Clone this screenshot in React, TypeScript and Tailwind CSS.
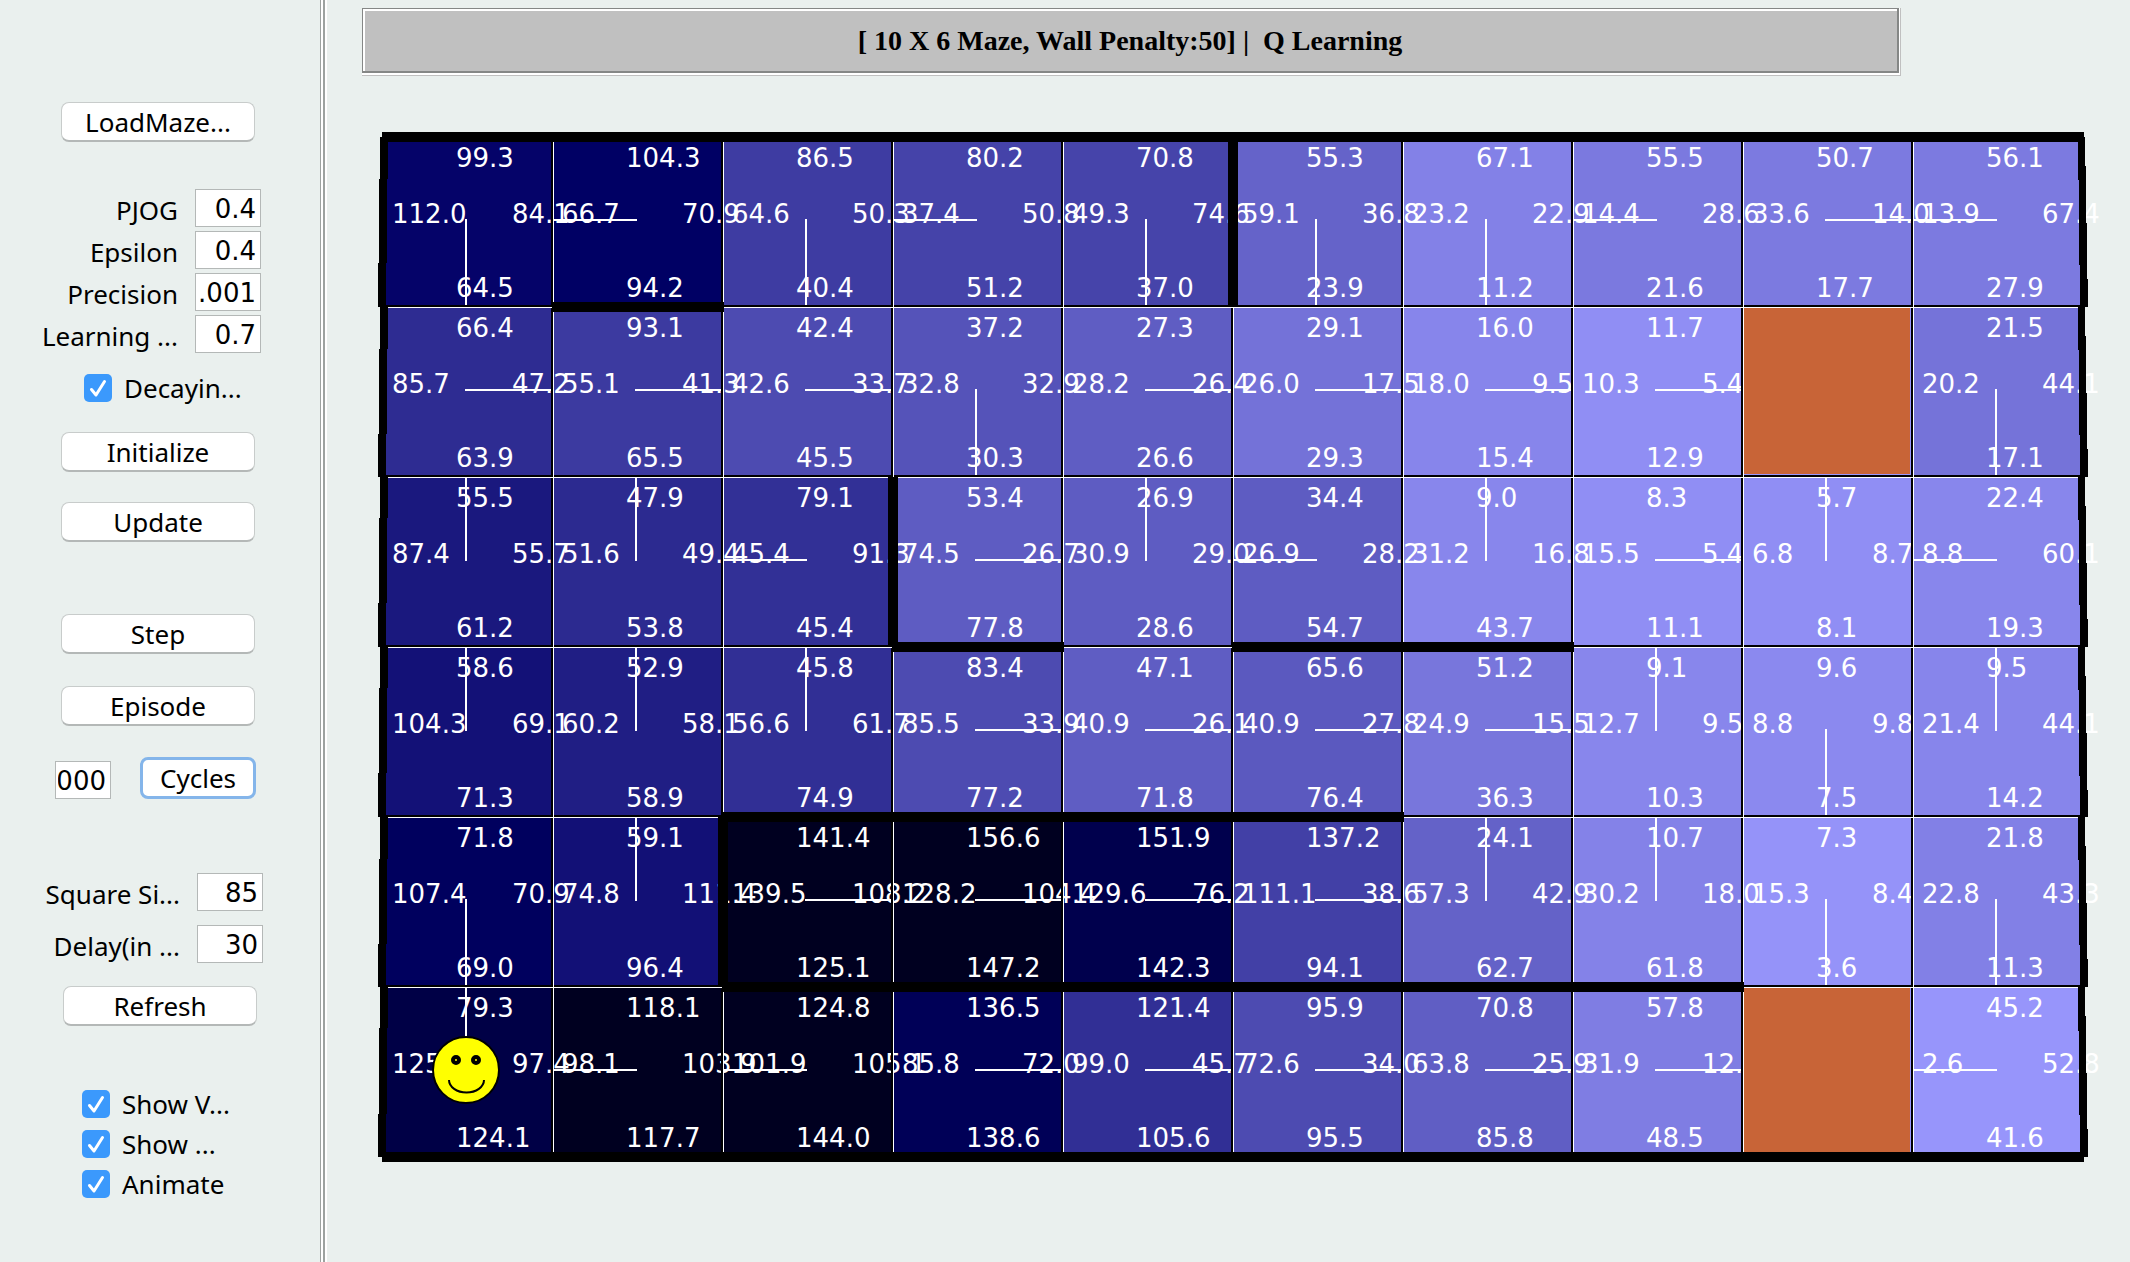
import React from "react";

type Cell = { up: string; left: string; right: string; down: string } | null;
type Direction = "up" | "left" | "right" | "down";

// Each entry lists the Q values as "up left right down"; "goal" marks a goal square.
const ROWS: string[][] = [
  ["99.3 112.0 84.1 64.5", "104.3 66.7 70.9 94.2", "86.5 64.6 50.3 40.4", "80.2 37.4 50.8 51.2", "70.8 49.3 74.6 37.0", "55.3 59.1 36.8 23.9", "67.1 23.2 22.9 11.2", "55.5 14.4 28.6 21.6", "50.7 33.6 14.0 17.7", "56.1 13.9 67.4 27.9"],
  ["66.4 85.7 47.2 63.9", "93.1 55.1 41.3 65.5", "42.4 42.6 33.7 45.5", "37.2 32.8 32.9 30.3", "27.3 28.2 26.4 26.6", "29.1 26.0 17.5 29.3", "16.0 18.0 9.5 15.4", "11.7 10.3 5.4 12.9", "goal", "21.5 20.2 44.1 17.1"],
  ["55.5 87.4 55.7 61.2", "47.9 51.6 49.4 53.8", "79.1 45.4 91.3 45.4", "53.4 74.5 26.7 77.8", "26.9 30.9 29.0 28.6", "34.4 26.9 28.2 54.7", "9.0 31.2 16.8 43.7", "8.3 15.5 5.4 11.1", "5.7 6.8 8.7 8.1", "22.4 8.8 60.1 19.3"],
  ["58.6 104.3 69.1 71.3", "52.9 60.2 58.1 58.9", "45.8 56.6 61.7 74.9", "83.4 85.5 33.9 77.2", "47.1 40.9 26.1 71.8", "65.6 40.9 27.8 76.4", "51.2 24.9 15.5 36.3", "9.1 12.7 9.5 10.3", "9.6 8.8 9.8 7.5", "9.5 21.4 44.1 14.2"],
  ["71.8 107.4 70.9 69.0", "59.1 74.8 111.4 96.4", "141.4 139.5 108.2 125.1", "156.6 128.2 104.4 147.2", "151.9 129.6 76.2 142.3", "137.2 111.1 38.6 94.1", "24.1 57.3 42.9 62.7", "10.7 30.2 18.0 61.8", "7.3 15.3 8.4 3.6", "21.8 22.8 43.3 11.3"],
  ["79.3 125.8 97.4 124.1", "118.1 98.1 103.9 117.7", "124.8 101.9 105.1 144.0", "136.5 85.8 72.0 138.6", "121.4 99.0 45.7 105.6", "95.9 72.6 34.0 95.5", "70.8 63.8 25.9 85.8", "57.8 31.9 12.7 48.5", "goal", "45.2 2.6 52.8 41.6"],
];

const CELLS: Cell[] = ROWS.flat().map((entry) => {
  if (entry === "goal") return null;
  const [up, left, right, down] = entry.split(" ");
  return { up, left, right, down };
});

const SIZE = 170;

// Column, row and length (in squares) of each horizontal wall.
const H_WALLS: [number, number, number][] = [
  [0, 0, 10],
  [1, 1, 1],
  [3, 3, 1],
  [5, 3, 2],
  [2, 4, 4],
  [2, 5, 6],
  [0, 6, 10],
];

// Column and row of each inner vertical wall.
const V_WALLS: [number, number][] = [
  [5, 0],
  [3, 2],
  [2, 4],
];

const LINES: Record<Direction, string> = {
  up: "left-[81px] top-0 h-[83px] w-[2px]",
  down: "left-[81px] top-[81px] h-[86px] w-[2px]",
  left: "left-0 top-[81px] h-[2px] w-[83px]",
  right: "left-[81px] top-[81px] h-[2px] w-[86px]",
};

function best(cell: NonNullable<Cell>): Direction {
  const order: Direction[] = ["left", "right", "up", "down"];
  return order.reduce((a, b) => (Number(cell[b]) < Number(cell[a]) ? b : a));
}

function shade(value: number) {
  const base = Math.round(157 - 2.36 * value);
  const rg = Math.max(0, base);
  return `rgb(${rg}, ${Math.max(0, rg - 2)}, ${Math.max(32, base + 100)})`;
}

function Face() {
  return (
    <svg viewBox="0 0 68 68" className="absolute left-12 top-12 z-40 size-[68px]" aria-label="Agent">
      <circle cx="34" cy="34" r="33" fill="#ffff00" stroke="#000" strokeWidth="2" />
      <circle cx="24" cy="24" r="3" fill="#ffff00" stroke="#000" strokeWidth="4" />
      <circle cx="44" cy="24" r="3" fill="#ffff00" stroke="#000" strokeWidth="4" />
      <path d="M17 44 A17.500 12.500 0 0 0 52 44" fill="none" stroke="#000" strokeWidth="2" />
    </svg>
  );
}

function Square({ cell, agent }: { cell: Cell; agent: boolean }) {
  const color = cell ? shade(Number(cell[best(cell)])) : "#9996ff";
  return (
    <div className="relative h-[170px] border-l border-t border-white" style={{ backgroundColor: color }}>
      {cell ? (
        <>
          <div className={`absolute bg-white ${LINES[best(cell)]}`} />
          <div className="relative z-10 flex flex-col pt-[5px]">
            <span className="pl-[72px]">{cell.up}</span>
            <span className="mt-[26px] flex pl-2">
              <span className="w-[120px] shrink-0">{cell.left}</span>
              <span>{cell.right}</span>
            </span>
            <span className="mt-11 pl-[72px]">{cell.down}</span>
          </div>
        </>
      ) : (
        <div className="absolute inset-0 bottom-[3px] right-[3px] z-20 bg-[#c86437]" />
      )}
      <div className="absolute inset-y-0 right-0 z-20 w-[2px] bg-black" />
      <div className="absolute inset-x-0 bottom-0 z-20 h-[2px] bg-black" />
      {agent && <Face />}
    </div>
  );
}

function Walls() {
  return (
    <svg viewBox="0 0 1700 1020" className="absolute left-0 top-0 z-30 h-[1020px] w-[1700px] overflow-visible" shapeRendering="crispEdges" aria-hidden="true">
      {H_WALLS.map(([c, r, n]) => (
        <rect key={`h${c}-${r}`} x={c * SIZE - 1} y={r * SIZE - 5} width={n * SIZE + 2} height="10" />
      ))}
      {V_WALLS.map(([c, r]) => (
        <rect key={`v${c}-${r}`} x={c * SIZE - 5} y={r * SIZE} width="10" height={SIZE} />
      ))}
      {[0, 1, 2, 3, 4, 5].map((r) => {
        const y = r * SIZE;
        const b = y + SIZE;
        return (
          <g key={r}>
            <polygon points={`-3,${y} 5,${y} 3,${b} -5,${b}`} />
            <polygon points={`1695,${y} 1702,${y} 1705,${b} 1697,${b}`} />
          </g>
        );
      })}
    </svg>
  );
}

function Button({ children, focused = false }: { children: string; focused?: boolean }) {
  return (
    <button
      type="button"
      className={
        focused
          ? "h-[42px] w-[116px] rounded-lg border-[3px] border-[#84b5ea] bg-white leading-8"
          : "h-10 w-[194px] rounded-lg border border-b-2 border-[#c8cccb] border-b-[#b4b8b7] bg-white leading-8"
      }
    >
      {children}
    </button>
  );
}

function Field({ id, value, label, narrow = false }: { id: string; value: string; label?: string; narrow?: boolean }) {
  return (
    <input
      id={id}
      aria-label={label}
      dir="rtl"
      type="text"
      defaultValue={value}
      className={`h-[38px] shrink-0 border border-[#b4b8b7] bg-white pl-[2px] pr-1 pt-[2px] font-['DejaVu_Sans',sans-serif] text-[26px] ${narrow ? "w-14" : "w-[66px]"}`}
    />
  );
}

function LabeledField({ id, value, children }: { id: string; value: string; children: string }) {
  return (
    <div className="flex h-[38px] items-center">
      <label htmlFor={id} className="w-[178px] whitespace-nowrap pt-[3px] text-right">
        {children}
      </label>
      <div className="ml-[17px] flex">
        <Field id={id} value={value} />
      </div>
    </div>
  );
}

function Check({ children }: { children: string }) {
  return (
    <label className="flex h-7 items-center gap-3 whitespace-nowrap">
      <span className="relative size-7">
        <input type="checkbox" defaultChecked className="block size-7 appearance-none rounded-[5px] bg-[#3b99fc]" />
        <svg viewBox="0 0 28 28" className="pointer-events-none absolute inset-0 size-7" aria-hidden="true">
          <path d="M7.500 15.500 L12 21 L20.500 7.500" fill="none" stroke="#fff" strokeWidth="3" strokeLinecap="round" strokeLinejoin="round" />
        </svg>
      </span>
      {children}
    </label>
  );
}

function Sidebar() {
  return (
    <aside className="flex w-80 shrink-0 flex-col pt-[102px] text-[26px] leading-9">
      <div className="pl-[61px]">
        <Button>LoadMaze...</Button>
      </div>
      <div className="mt-[47px] flex flex-col gap-1">
        <LabeledField id="pjog" value="0.4">PJOG</LabeledField>
        <LabeledField id="epsilon" value="0.4">Epsilon</LabeledField>
        <LabeledField id="precision" value="0.001">Precision</LabeledField>
        <LabeledField id="learning" value="0.7">Learning ...</LabeledField>
      </div>
      <div className="mt-[21px] pl-[84px]">
        <Check>Decayin...</Check>
      </div>
      <div className="mt-[30px] flex flex-col items-start gap-[30px] pl-[61px]">
        <Button>Initialize</Button>
        <Button>Update</Button>
      </div>
      <div className="mt-[72px] flex flex-col items-start gap-8 pl-[61px]">
        <Button>Step</Button>
        <Button>Episode</Button>
      </div>
      <div className="mt-[31px] flex items-end gap-[29px] pl-[55px]">
        <Field id="cycles" label="Number of cycles" value="1000" narrow />
        <Button focused>Cycles</Button>
      </div>
      <div className="mt-[74px] flex flex-col gap-[14px] pl-[2px]">
        <LabeledField id="square" value="85">Square Si...</LabeledField>
        <LabeledField id="delay" value="30">Delay(in ...</LabeledField>
      </div>
      <div className="mt-[23px] pl-[63px]">
        <Button>Refresh</Button>
      </div>
      <div className="mt-16 flex flex-col items-start gap-3 pl-[82px]">
        <Check>Show V...</Check>
        <Check>Show ...</Check>
        <Check>Animate</Check>
      </div>
    </aside>
  );
}

export default function App() {
  return (
    <div className="flex min-h-screen overflow-hidden bg-[#eaf0ee] font-['Noto_Sans',sans-serif] text-black">
      <Sidebar />
      <div className="flex w-[7px] shrink-0 border-l border-[#9da2a0] bg-white pl-[2px]">
        <div className="w-[2px] bg-[#9da2a0]" />
      </div>
      <main className="min-w-0 flex-1 pl-[35px] pt-2">
        <div className="mr-[229px] border-b border-r border-[#c0c0c0] bg-white pb-[2px] pr-px">
          <h1 className="flex h-[65px] items-center justify-center whitespace-pre border border-b-2 border-r-2 border-[#858786] bg-[#c0c0c0] pt-[2px] font-['Liberation_Serif',serif] text-[28px] font-bold shadow-[inset_2px_2px_0_#fff]">
            {"[ 10 X 6 Maze, Wall Penalty:50] |  Q Learning"}
          </h1>
        </div>
        <section aria-label="Maze" className="relative ml-[21px] mt-[61px] grid w-[1700px] grid-cols-10 font-['DejaVu_Sans',sans-serif] text-[26px] leading-[30px] text-white">
          {CELLS.map((cell, i) => (
            <Square key={i} cell={cell} agent={i === 50} />
          ))}
          <Walls />
        </section>
      </main>
    </div>
  );
}
